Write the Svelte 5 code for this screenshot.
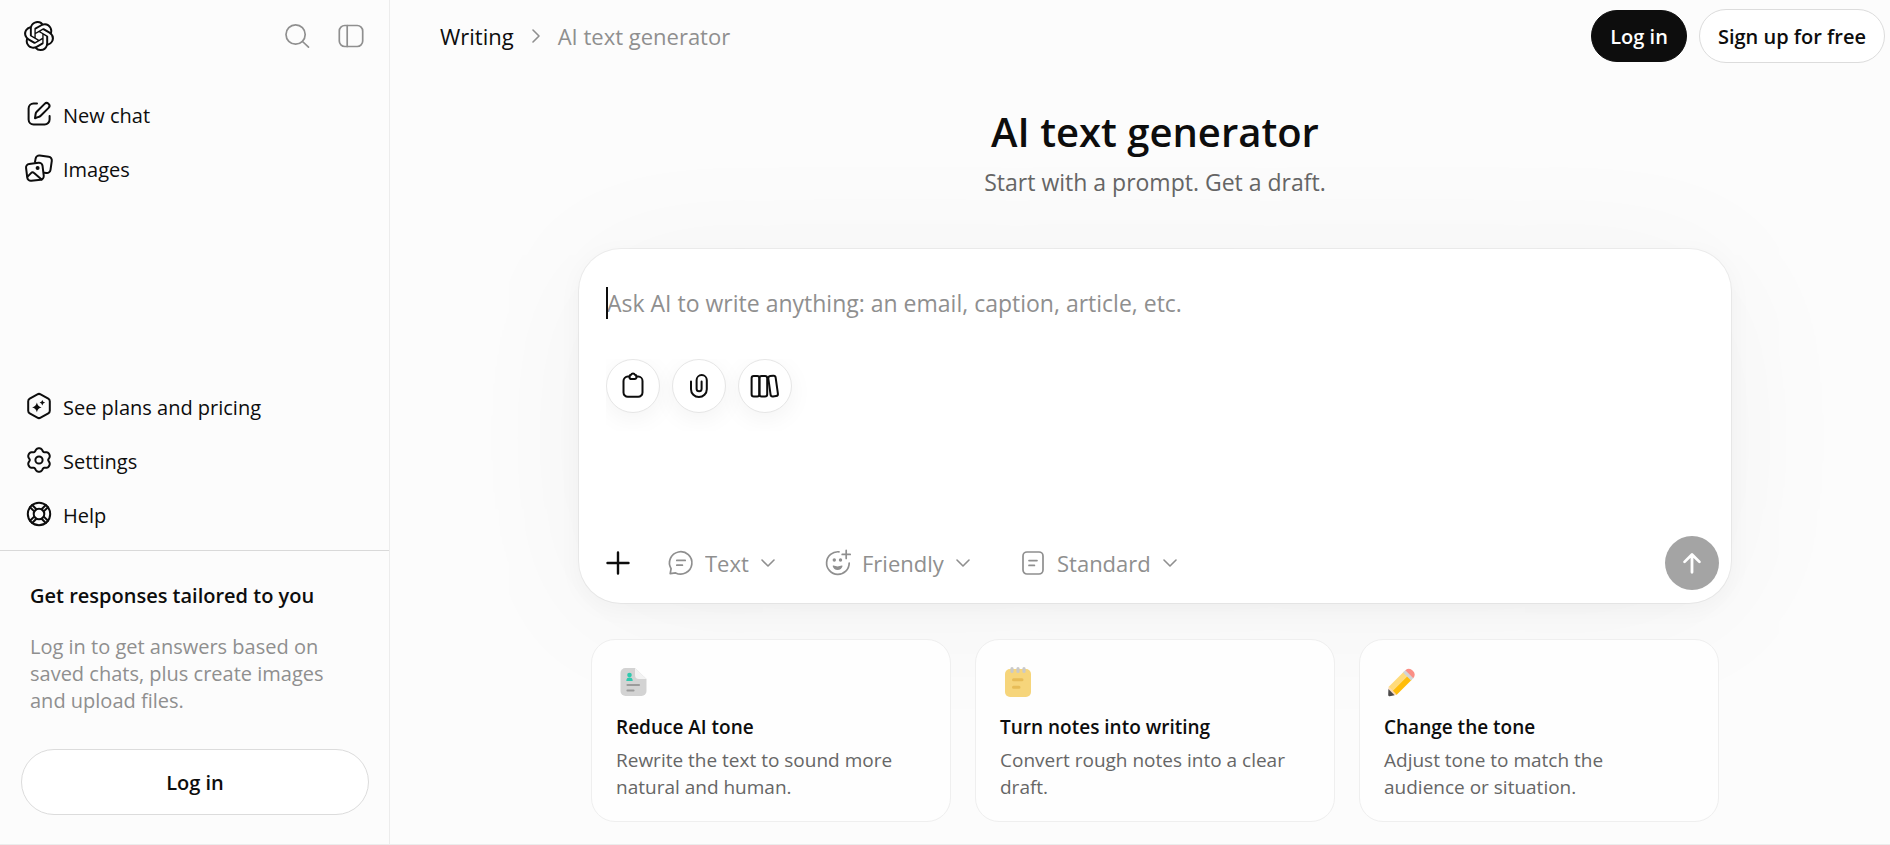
<script>
    import { onMount } from 'svelte';

    let prompt = $state('');
    let format = $state('Text');
    let tone = $state('Friendly');
    let length = $state('Standard');
    let promptBox;

    const topLinks = [
        { label: 'New chat', icon: 'compose' },
        { label: 'Images', icon: 'images' }
    ];

    const bottomLinks = [
        { label: 'See plans and pricing', icon: 'plans' },
        { label: 'Settings', icon: 'settings' },
        { label: 'Help', icon: 'help' }
    ];

    const tools = [
        { label: 'Paste text', icon: 'clipboard' },
        { label: 'Attach file', icon: 'paperclip' },
        { label: 'Library', icon: 'library' }
    ];

    const cards = [
        { title: 'Reduce AI tone', text: 'Rewrite the text to sound more natural and human.', icon: 'document' },
        { title: 'Turn notes into writing', text: 'Convert rough notes into a clear draft.', icon: 'notepad' },
        { title: 'Change the tone', text: 'Adjust tone to match the audience or situation.', icon: 'pencil' }
    ];

    // six-lobed outline of the settings icon
    function gear() {
        let points = [];
        for (let i = 0; i < 72; i++) {
            const a = (i / 72) * Math.PI * 2;
            const r = 10.7 + 1.3 * Math.cos(a * 6) - 0.25 * Math.cos(a * 12);
            points.push((15 + r * Math.sin(a)).toFixed(2) + ' ' + (15 - r * Math.cos(a)).toFixed(2));
        }
        return 'M' + points.join('L') + 'Z';
    }
    const gearPath = gear();

    onMount(() => {
        promptBox.focus();
    });
</script>

{#snippet icon(name)}
    <svg class="icon" viewBox="0 0 30 30" aria-hidden="true">
        {#if name === 'search'}
            <circle cx="13.6" cy="13.5" r="9.6" />
            <path d="M20.5 20.5l6 5.6" />
        {:else if name === 'sidebar'}
            <rect x="3.3" y="4.5" width="23.4" height="21" rx="5.5" />
            <path d="M11.2 4.5v21" />
        {:else if name === 'compose'}
            <path d="M13 4.6H9.6a5 5 0 0 0-5 5v10.8a5 5 0 0 0 5 5h11a5 5 0 0 0 5-5V17" />
            <path d="M11 19.2l.6-4.2a4 4 0 0 1 1.1-2.2l7.9-7.9a2.8 2.8 0 0 1 4 4l-7.9 7.9a4 4 0 0 1-2.2 1.1z" />
        {:else if name === 'images'}
            <path d="M11 9l.6-3.4a3.6 3.6 0 0 1 4.1-3l9 1.2a3.6 3.6 0 0 1 3.1 4.1l-1.3 9a3.6 3.6 0 0 1-4.1 3.1l-2.2-.3" />
            <rect x="2.6" y="10.3" width="16.6" height="17" rx="3.6" transform="rotate(-7 10.9 18.8)" />
            <path d="M3.6 23.6l3.4-3.5a2.2 2.2 0 0 1 3.1-.1l7.5 6.6" />
            <circle class="solid" cx="13.6" cy="14.9" r="2" />
        {:else if name === 'plans'}
            <path d="M13.4 3.3a3.4 3.4 0 0 1 3.2 0l7.7 4.3a3 3 0 0 1 1.5 2.6v9.6a3 3 0 0 1-1.5 2.6l-7.7 4.3a3.4 3.4 0 0 1-3.2 0l-7.7-4.3a3 3 0 0 1-1.5-2.6v-9.6a3 3 0 0 1 1.5-2.6z" />
            <path class="fill" d="M12.9 11.6q.7 4 4.7 4.9q-4 .7-4.7 4.7q-.9-4-4.8-4.7q3.9-.9 4.8-4.9zM18.3 8.9q.5 2.3 2.8 2.7q-2.3.5-2.8 2.8q-.5-2.3-2.7-2.8q2.2-.4 2.7-2.7z" />
        {:else if name === 'settings'}
            <path d={gearPath} />
            <circle cx="15" cy="15" r="3.6" />
        {:else if name === 'help'}
            <circle cx="15" cy="15" r="11.2" />
            <circle cx="15" cy="15" r="5.3" />
            <path d="M6 8.2l4.2 4.2M8.2 6l4.2 4.2M24 8.2l-4.2 4.2M21.8 6l-4.2 4.2M6 21.8l4.2-4.2M8.2 24l4.2-4.2M24 21.8l-4.2-4.2M21.8 24l-4.2-4.2" />
        {:else if name === 'clipboard'}
            <path d="M11.5 5.6H9.8a4.3 4.3 0 0 0-4.3 4.3v11.6a4.3 4.3 0 0 0 4.3 4.3h10.4a4.3 4.3 0 0 0 4.3-4.3V9.9a4.3 4.3 0 0 0-4.3-4.3h-1.7" />
            <path d="M11.5 5.5a1.8 1.8 0 0 1 1.5-1.7a2.2 2.2 0 0 1 4 0a1.8 1.8 0 0 1 1.5 1.7v.8a1.8 1.8 0 0 1-1.8 1.8h-3.4a1.8 1.8 0 0 1-1.8-1.8z" />
        {:else if name === 'paperclip'}
            <path d="M7 10.6v7.6a7.9 7.9 0 0 0 15.8 0V9.2a5 5 0 0 0-10.2 0v8.6a2.5 2.5 0 0 0 5 0v-7.2" />
        {:else if name === 'library'}
            <rect x="1.6" y="5" width="7.8" height="20.4" rx="2.2" />
            <rect x="9.4" y="5" width="7.8" height="20.4" rx="2.2" />
            <rect x="19.4" y="4.8" width="7.4" height="20.6" rx="2.2" transform="rotate(-8 23 15)" />
        {:else if name === 'plus'}
            <path d="M15 4.5v21M4.5 15h21" />
        {:else if name === 'text'}
            <path d="M4.2 25.6l.9-4.9A11.2 11.2 0 1 1 9.6 24.9z" />
            <path d="M10.8 12.4h8.4M10.8 17.2h5.6" />
        {:else if name === 'friendly'}
            <path d="M16 3.8A11.3 11.3 0 1 0 26.2 15" />
            <path d="M23.2 2.4v8M19.2 6.4h8" />
            <circle class="solid" cx="11.3" cy="12" r="1.7" />
            <circle class="solid" cx="17.5" cy="12" r="1.7" />
            <path class="fill" d="M10.4 17.6q4.2 1.6 8.4 0q.8-.2.7.6a5.1 5.1 0 0 1-9.8 0q-.1-.8.7-.6z" />
        {:else if name === 'standard'}
            <rect x="5" y="4" width="20" height="22" rx="4" />
            <path d="M11 12.6h8M11 17.4h5.4" />
        {:else if name === 'send'}
            <path d="M15 25V6.2M7 13.8l8-8l8 8" />
        {/if}
    </svg>
{/snippet}

{#snippet chevron()}
    <svg class="chevron" viewBox="0 0 14 14" aria-hidden="true"><path d="M1 4l6 6l6-6" /></svg>
{/snippet}

{#snippet cardIcon(name)}
    <svg class="card-icon" viewBox="0 0 36 36" aria-hidden="true">
        {#if name === 'document'}
            <path fill="#d3d3d3" d="M9.5 4H19l11.5 11v12a5 5 0 0 1-5 5h-16a5 5 0 0 1-5-5V9a5 5 0 0 1 5-5z" />
            <path fill="#f3f3f3" d="M19 4l11.5 11H23a4 4 0 0 1-4-4z" />
            <circle fill="#2fc9ae" cx="13.5" cy="11" r="2.3" />
            <path fill="#2fc9ae" d="M10.3 17a3.2 3.4 0 0 1 6.4 0z" />
            <path stroke="#9b9b9b" stroke-width="2.2" stroke-linecap="round" d="M11.5 21h11.5M11.5 26.5h6" />
        {:else if name === 'notepad'}
            <rect fill="#f6d57b" x="5" y="5" width="26" height="28" rx="5" />
            <path stroke="#c9c9c9" stroke-width="3.2" stroke-linecap="round" d="M12 4.5v3M18 4.5v3M24 4.5v3" />
            <path stroke="#e7bc57" stroke-width="3" stroke-linecap="round" d="M13.5 15.8h8.5M13.5 23.3h5.5" />
        {:else}
            <path fill="#ffdb7b" d="M4.5 23L20 7.5l4 4L8.500 27z" />
            <path fill="#ffbd0a" d="M8.500 27L24 11.500l4 4L12.500 31z" />
            <path fill="#fbd9b6" d="M4.300 25L4.800 22.700L12.700 30.700L10 31.300z" />
            <path fill="#4c4a4a" d="M4.400 25l6.200 6.200l-4.800 1a1.300 1.300 0 0 1-1.600-1.400z" />
            <path fill="#d2d5d6" d="M19 8.500l2.500-2.500l8 8l-2.500 2.500z" />
            <path fill="#fb8f86" d="M21.300 6.200a5.700 5.700 0 0 1 8 8z" />
        {/if}
    </svg>
{/snippet}

<div class="page">
    <aside class="sidebar">
        <div class="sidebar-top">
            <a class="logo" href="#home" aria-label="Home">
                <svg class="icon" viewBox="0 0 24 24" aria-hidden="true">
                    <path class="logo-mark" d="M22.2819 9.8211a5.9847 5.9847 0 0 0-.5157-4.9108 6.0462 6.0462 0 0 0-6.5098-2.9A6.0651 6.0651 0 0 0 4.9807 4.1818a5.9847 5.9847 0 0 0-3.9977 2.9 6.0462 6.0462 0 0 0 .7427 7.0966 5.98 5.98 0 0 0 .511 4.9107 6.051 6.051 0 0 0 6.5146 2.9001A5.9847 5.9847 0 0 0 13.2599 24a6.0557 6.0557 0 0 0 5.7718-4.2058 5.9894 5.9894 0 0 0 3.9977-2.9001 6.0557 6.0557 0 0 0-.7475-7.0729zm-9.022 12.6081a4.4755 4.4755 0 0 1-2.8764-1.0408l.1419-.0804 4.7783-2.7582a.7948.7948 0 0 0 .3927-.6813v-6.7369l2.02 1.1686a.071.071 0 0 1 .038.052v5.5826a4.504 4.504 0 0 1-4.4945 4.4944zm-9.6607-4.1254a4.4708 4.4708 0 0 1-.5346-3.0137l.142.0852 4.783 2.7582a.7712.7712 0 0 0 .7806 0l5.8428-3.3685v2.3324a.0804.0804 0 0 1-.0332.0615L9.74 19.9502a4.4992 4.4992 0 0 1-6.1408-1.6464zM2.3408 7.8956a4.485 4.485 0 0 1 2.3655-1.9728V11.6a.7664.7664 0 0 0 .3879.6765l5.8144 3.3543-2.0201 1.1685a.0757.0757 0 0 1-.071 0l-4.8303-2.7865A4.504 4.504 0 0 1 2.3408 7.872zm16.5963 3.8558L13.1038 8.364 15.1192 7.2a.0757.0757 0 0 1 .071 0l4.8303 2.7913a4.4944 4.4944 0 0 1-.6765 8.1042v-5.6772a.79.79 0 0 0-.407-.667zm2.0107-3.0231l-.142-.0852-4.7735-2.7818a.7759.7759 0 0 0-.7854 0L9.409 9.2297V6.8974a.0662.0662 0 0 1 .0284-.0615l4.8303-2.7866a4.4992 4.4992 0 0 1 6.6802 4.66zM8.3065 12.863l-2.02-1.1638a.0804.0804 0 0 1-.038-.0567V6.0742a4.4992 4.4992 0 0 1 7.3757-3.4537l-.142.0805L8.704 5.459a.7948.7948 0 0 0-.3927.6813zm1.0976-2.3654l2.602-1.4998 2.6069 1.4998v2.9994l-2.5974 1.4997-2.6067-1.4997Z" />
                </svg>
            </a>
            <button class="bare" aria-label="Search">{@render icon('search')}</button>
            <button class="bare" aria-label="Close sidebar">{@render icon('sidebar')}</button>
        </div>

        <nav class="links">
            {#each topLinks as link}
                <a href="#{link.icon}">{@render icon(link.icon)}<span>{link.label}</span></a>
            {/each}
        </nav>

        <nav class="links links-bottom">
            {#each bottomLinks as link}
                <a href="#{link.icon}">{@render icon(link.icon)}<span>{link.label}</span></a>
            {/each}
        </nav>

        <div class="promo">
            <h2>Get responses tailored to you</h2>
            <p>Log in to get answers based on saved chats, plus create images and upload files.</p>
            <button class="pill">Log in</button>
        </div>
    </aside>

    <main>
        <header>
            <nav class="crumbs">
                <a href="#writing">Writing</a>
                <svg class="chevron" viewBox="0 0 14 14" aria-hidden="true"><path d="M4 1l6 6l-6 6" /></svg>
                <span>AI text generator</span>
            </nav>
            <button class="pill dark">Log in</button>
            <button class="pill">Sign up for free</button>
        </header>

        <div class="content">
            <h1>AI text generator</h1>
            <p class="subtitle">Start with a prompt. Get a draft.</p>

            <form class="composer" onsubmit={(e) => e.preventDefault()}>
                <div class="prompt">
                    <textarea
                        rows="1"
                        aria-label="Prompt"
                        placeholder="Ask AI to write anything: an email, caption, article, etc."
                        bind:this={promptBox}
                        bind:value={prompt}
                    ></textarea>
                    {#if prompt === ''}<span class="caret"></span>{/if}
                </div>

                <div class="tools">
                    {#each tools as tool}
                        <button type="button" class="tool" aria-label={tool.label}>{@render icon(tool.icon)}</button>
                    {/each}
                </div>

                <div class="actions">
                    <button type="button" class="add" aria-label="Add">{@render icon('plus')}</button>
                    <label class="picker">
                        {@render icon('text')}
                        <select aria-label="Format" bind:value={format}>
                            <option>Text</option>
                        </select>
                        {@render chevron()}
                    </label>
                    <label class="picker">
                        {@render icon('friendly')}
                        <select aria-label="Tone" bind:value={tone}>
                            <option>Friendly</option>
                        </select>
                        {@render chevron()}
                    </label>
                    <label class="picker">
                        {@render icon('standard')}
                        <select aria-label="Length" bind:value={length}>
                            <option>Standard</option>
                        </select>
                        {@render chevron()}
                    </label>
                    <button class="send" aria-label="Send">{@render icon('send')}</button>
                </div>
            </form>

            <div class="cards">
                {#each cards as card}
                    <button class="card">
                        {@render cardIcon(card.icon)}
                        <strong>{card.title}</strong>
                        <span>{card.text}</span>
                    </button>
                {/each}
            </div>
        </div>
    </main>
</div>

<style>
    :global(body) {
        margin: 0;
        background: #fcfcfc;
    }

    .page {
        display: flex;
        box-sizing: border-box;
        min-height: 100vh;
        border-bottom: 1px solid #ececec;
        font-family: "Segoe UI", "Open Sans", "Noto Sans", sans-serif;
        font-size: 20px;
        line-height: 27px;
        color: #0d0d0d;
    }

    button,
    select,
    textarea {
        font: inherit;
        color: inherit;
        padding: 0;
        border: 0;
        background: none;
    }

    button {
        cursor: pointer;
    }

    a {
        color: inherit;
        text-decoration: none;
    }

    h1,
    h2,
    p {
        margin: 0;
    }

    .icon {
        display: block;
        flex: none;
        width: 30px;
        height: 30px;
        fill: none;
        stroke: currentColor;
        stroke-width: 2;
        stroke-linecap: round;
        stroke-linejoin: round;
    }

    .solid,
    .fill,
    .logo-mark {
        fill: currentColor;
        stroke: none;
    }

    .chevron {
        display: block;
        flex: none;
        width: 14px;
        height: 14px;
        fill: none;
        stroke: #8f8f8f;
        stroke-width: 1.6;
        stroke-linecap: round;
        stroke-linejoin: round;
    }

    .sidebar {
        display: flex;
        flex-direction: column;
        flex: none;
        box-sizing: border-box;
        width: 390px;
        border-right: 1px solid #ececec;
    }

    .sidebar-top {
        display: flex;
        align-items: center;
        gap: 24px;
        height: 72px;
        padding: 0 23px 0 24px;
        color: #8f8f8f;
    }

    .sidebar-top .icon,
    .picker .icon {
        stroke-width: 1.7;
    }

    .logo {
        margin-right: auto;
        color: #0d0d0d;
    }

    .links {
        display: flex;
        flex-direction: column;
        padding: 15px 24px 0;
    }

    .links a {
        display: flex;
        align-items: center;
        gap: 9px;
        height: 54px;
    }

    .links span {
        padding-top: 2px;
    }

    .links-bottom {
        margin-top: auto;
        padding: 0 24px 9px;
    }

    .promo {
        display: flex;
        flex-direction: column;
        gap: 24px;
        padding: 31px 20px 29px 21px;
        border-top: 1px solid #d9d9d9;
    }

    .promo h2 {
        padding: 0 9px;
        font-size: 20px;
        font-weight: 600;
    }

    .promo p {
        padding: 0 9px;
        color: #8f8f8f;
    }

    .pill {
        box-sizing: border-box;
        height: 54px;
        padding: 0 18px;
        border: 1px solid #dcdcdc;
        border-radius: 33px;
        background: #fff;
        font-weight: 600;
    }

    .promo .pill {
        height: 66px;
        margin-top: 11px;
    }

    .pill.dark {
        height: 52px;
        border-color: #0d0d0d;
        background: #0d0d0d;
        color: #fff;
    }

    main {
        flex: 1;
        min-width: 0;
    }

    header {
        display: flex;
        align-items: center;
        gap: 12px;
        height: 72px;
        padding: 0 5px 0 50px;
    }

    .crumbs {
        display: flex;
        align-items: center;
        gap: 15px;
        margin-right: auto;
        font-size: 22px;
    }

    .crumbs span {
        color: #8f8f8f;
    }

    .content {
        display: flex;
        flex-direction: column;
        align-items: center;
        padding: 36px 24px 22px 54px;
    }

    h1 {
        font-size: 40px;
        line-height: 48px;
        font-weight: 600;
    }

    .subtitle {
        margin-top: 8px;
        font-size: 23px;
        line-height: 36px;
        color: #666;
    }

    .composer {
        display: flex;
        flex-direction: column;
        box-sizing: border-box;
        width: 100%;
        max-width: 1152px;
        min-height: 354px;
        margin-top: 49px;
        padding: 36px 12px 13px 27px;
        border-radius: 42px;
        background: #fff;
        box-shadow:
            0 0 0 1px rgba(0, 0, 0, 0.05),
            0 6px 24px rgba(0, 0, 0, 0.04),
            0 12px 150px rgba(0, 0, 0, 0.04);
    }

    .prompt {
        position: relative;
    }

    textarea {
        display: block;
        box-sizing: border-box;
        width: 100%;
        height: 36px;
        padding-left: 1px;
        font-size: 23px;
        line-height: 36px;
        resize: none;
        outline: none;
        overflow: hidden;
        caret-color: transparent;
    }

    textarea::placeholder {
        color: #8f8f8f;
        opacity: 1;
    }

    .caret {
        position: absolute;
        top: 2px;
        left: 0;
        width: 2px;
        height: 32px;
        background: #0d0d0d;
    }

    .tools {
        display: flex;
        gap: 12px;
        margin-top: 38px;
        padding-bottom: 18px;
        overflow: hidden;
    }

    .tool {
        display: grid;
        place-items: center;
        box-sizing: border-box;
        width: 54px;
        height: 54px;
        border: 1px solid #e6e6e6;
        border-radius: 50%;
        background: #fff;
        box-shadow: 0 6px 24px rgba(0, 0, 0, 0.05);
    }

    .actions {
        display: flex;
        align-items: center;
        margin-top: auto;
    }

    .add {
        margin-left: -3px;
    }

    .add .icon {
        stroke-width: 2.4;
    }

    .picker {
        display: flex;
        align-items: center;
        gap: 12px;
        margin-left: 33px;
        color: #8f8f8f;
        font-size: 22px;
    }

    .picker + .picker {
        margin-left: 48px;
    }

    select {
        appearance: none;
        outline: none;
        line-height: 30px;
        cursor: pointer;
        margin-left: -3px;
    }

    .send {
        display: grid;
        place-items: center;
        width: 54px;
        height: 54px;
        margin-left: auto;
        border-radius: 50%;
        background: #a4a4a4;
        color: #fff;
    }

    .send .icon {
        width: 28px;
        height: 28px;
        stroke-width: 3;
    }

    .cards {
        display: grid;
        grid-template-columns: repeat(3, 1fr);
        gap: 24px;
        box-sizing: border-box;
        width: 100%;
        max-width: 1152px;
        margin-top: 36px;
        padding: 0 12px;
    }

    .card {
        display: flex;
        flex-direction: column;
        align-items: flex-start;
        padding: 24px 36px 20px 24px;
        border: 1px solid #efefef;
        border-radius: 24px;
        background: rgba(255, 255, 255, 0.75);
        font-size: 19px;
        text-align: left;
    }

    .card strong {
        margin-top: 14px;
        font-weight: 600;
    }

    .card span {
        margin-top: 6px;
        color: #666;
    }

    .card-icon {
        display: block;
        width: 36px;
        height: 36px;
        fill: none;
    }
</style>
